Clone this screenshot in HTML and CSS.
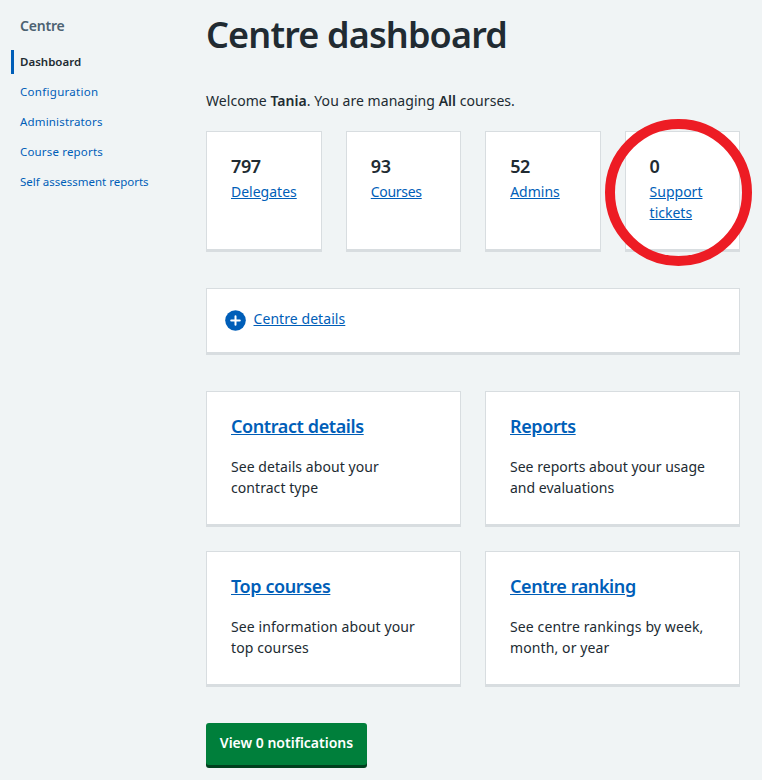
FILE: index.html
```html
<!DOCTYPE html>
<html lang="en">
<head>
<meta charset="utf-8">
<title>Centre dashboard</title>
<link rel="stylesheet" href="styles.css">
</head>
<body>
<div class="page">
  <nav class="sidebar">
    <h2>Centre</h2>
    <ul>
      <li class="current"><a href="#">Dashboard</a></li>
      <li class="wide"><a href="#">Configuration</a></li>
      <li class="medium"><a href="#">Administrators</a></li>
      <li class="medium"><a href="#">Course reports</a></li>
      <li><a href="#">Self assessment reports</a></li>
    </ul>
  </nav>
  <main>
    <h1>Centre dashboard</h1>
    <p class="welcome">Welcome <b>Tania</b>. You are managing <b>All</b> courses.</p>
    <div class="stats">
      <div class="card stat"><strong>797</strong><a href="#">Delegates</a></div>
      <div class="card stat"><strong>93</strong><a class="tight" href="#">Courses</a></div>
      <div class="card stat"><strong>52</strong><a href="#">Admins</a></div>
      <div class="card stat"><strong>0</strong><a href="#">Support<br>tickets</a>
        <span class="ring"></span>
      </div>
    </div>
    <div class="card expander">
      <svg width="21" height="21" viewBox="0 0 21 21"><circle cx="10.5" cy="10.5" r="10.3" fill="#005eb8"/><path d="M10.5 6.2v8.6M6.2 10.5h8.6" stroke="#fff" stroke-width="2" stroke-linecap="round"/></svg>
      <a href="#">Centre details</a>
    </div>
    <div class="grid">
      <div class="card tile"><h2><a href="#">Contract details</a></h2><p>See details about your<br>contract type</p></div>
      <div class="card tile"><h2><a href="#">Reports</a></h2><p class="usage">See reports about your usage<br>and evaluations</p></div>
      <div class="card tile"><h2><a href="#">Top courses</a></h2><p class="info">See information about your<br>top courses</p></div>
      <div class="card tile"><h2><a href="#">Centre ranking</a></h2><p class="info">See centre rankings by week,<br>month, or year</p></div>
    </div>
    <button type="button">View 0 notifications</button>
  </main>
</div>
</body>
</html>
```
FILE: styles.css
```css
* { box-sizing: border-box; }
body { margin: 0; background: #f0f4f5; color: #212b32; font: 14px/21px "Noto Sans", "Open Sans", sans-serif; }
h1, h2, p, ul { margin: 0; padding: 0; }
a { color: #005eb8; text-underline-offset: 1px; }
b { font-weight: 600; }
.page { display: flex; height: 780px; overflow: hidden; }
.sidebar { width: 206px; padding: 15px 0 0 11px; }
.sidebar h2 { font-size: 14px; font-weight: 600; line-height: 22px; letter-spacing: -0.2px; color: #4c6272; padding-left: 9px; }
.sidebar ul { list-style: none; margin-top: 13px; }
.sidebar li { height: 24px; margin-bottom: 6px; padding-left: 9px; font-size: 11.5px; line-height: 24px; white-space: nowrap; }
.sidebar .wide { letter-spacing: 0.3px; }
.sidebar .medium { letter-spacing: 0.17px; }
.sidebar a { text-decoration: none; }
.sidebar .current { border-left: 3px solid #005eb8; padding-left: 6px; font-weight: 600; }
.sidebar .current a { color: #212b32; }
main { width: 534px; padding-top: 12px; }
h1 { font-size: 36px; line-height: 46px; font-weight: 600; letter-spacing: -0.85px; white-space: nowrap; }
.welcome { margin: 32px 0 20px; letter-spacing: 0.05px; white-space: nowrap; }
.card { background: #fff; border: 1px solid #d8dde0; border-bottom-width: 3px; }
.stats { display: grid; grid-template-columns: repeat(4, 1fr); gap: 24px; }
.stat { position: relative; height: 121px; padding: 22px 24px; }
.stat strong { display: block; margin-bottom: 2px; font-size: 18px; line-height: 25px; font-weight: 600; letter-spacing: -0.4px; }
.tight { letter-spacing: -0.3px; }
.ring { position: absolute; left: -21px; top: -13px; width: 147px; height: 147px; border: 10px solid #ed1c24; border-radius: 50%; }
.expander { display: flex; gap: 7.5px; height: 67px; margin: 36px 0; padding: 19px 0 0 18px; letter-spacing: 0.07px; }
.expander svg { margin-top: 2px; }
.grid { display: grid; grid-template-columns: 1fr 1fr; gap: 24px; }
.tile { height: 136px; padding: 22px 24px; white-space: nowrap; }
.tile h2 { font-size: 18px; line-height: 25px; font-weight: 600; letter-spacing: -0.4px; }
.tile p { margin-top: 17px; letter-spacing: 0.06px; }
.tile .usage { letter-spacing: 0.02px; }
.tile .info { letter-spacing: 0.11px; }
button { display: block; width: 161px; height: 42px; margin-top: 36px; padding: 0 0 3px; border: 0; border-radius: 3px; background: #007f3b; box-shadow: 0 3px 0 #00401e; color: #fff; font: 600 14px/21px "Noto Sans", sans-serif; white-space: nowrap; }
```
